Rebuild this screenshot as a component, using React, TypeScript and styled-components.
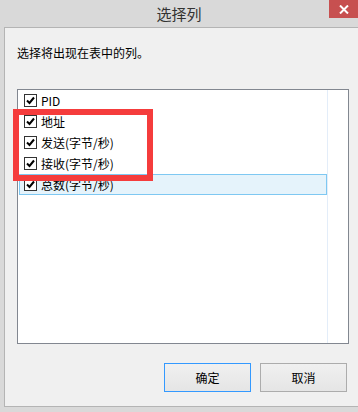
import React from "react";
import styled, { createGlobalStyle } from "styled-components";

const Global = createGlobalStyle`
  html, body { margin: 0; padding: 0; }
  body {
    background: #d9d9d9;
    font-family: "Noto Sans CJK SC", "Noto Sans", sans-serif;
    font-size: 12px;
    color: #000;
  }
`;

const Window = styled.div`
  position: relative;
  width: 358px;
  height: 412px;
  display: flex;
  flex-direction: column;
  overflow: hidden;
  background: #d9d9d9;
`;

const TitleBar = styled.div`
  height: 27px;
  display: grid;
  grid-template-columns: 1fr auto 1fr;
  align-items: start;
`;

const Title = styled.div`
  grid-column: 2;
  font-size: 15px;
  line-height: 27px;
  color: #333;
`;

const CloseButton = styled.div`
  grid-column: 3;
  justify-self: end;
  width: 29px;
  height: 18px;
  background: #c75050;
  display: flex;
  align-items: center;
  justify-content: center;
`;

const Client = styled.div`
  margin: 0 0 5px 4px;
  flex: 1;
  background: #f0f0f0;
  border: 1px solid #b4b4b4;
  border-right: none;
  padding: 17px 0 0 12px;
  display: flex;
  flex-direction: column;
`;

const Prompt = styled.div`
  line-height: 16px;
  height: 16px;
`;

const ListBox = styled.div`
  margin-top: 28px;
  width: 328px;
  height: 253px;
  background: #fff;
  border: 1px solid #828790;
  padding: 0 1px;
  display: flex;
`;

const Column = styled.div`
  width: 308px;
  border-right: 1px solid #e3edf9;
  display: flex;
  flex-direction: column;
`;

const Row = styled.div<{ $selected?: boolean }>`
  height: 21px;
  box-sizing: border-box;
  display: flex;
  align-items: center;
  gap: 4px;
  padding-left: ${(p) => (p.$selected ? 4 : 5)}px;
  background: ${(p) => (p.$selected ? "#e5f3fb" : "transparent")};
  border: ${(p) => (p.$selected ? "1px solid #7ec8f2" : "none")};
  line-height: 16px;
`;

const Box = styled.span`
  width: 11px;
  height: 11px;
  border: 1px solid #333;
  background: #fff;
  display: flex;
  align-items: center;
  justify-content: center;
  flex: none;
`;

const Buttons = styled.div`
  margin-top: 19px;
  width: 330px;
  display: flex;
  justify-content: flex-end;
  gap: 9px;
`;

const Button = styled.div<{ $default?: boolean }>`
  width: 85px;
  height: 27px;
  border: 1px solid ${(p) => (p.$default ? "#3399ff" : "#acacac")};
  background: linear-gradient(#f0f0f0, #e5e5e5);
  display: flex;
  align-items: center;
  justify-content: center;
`;

const Highlight = styled.div`
  position: absolute;
  left: 13px;
  top: 109px;
  width: 128px;
  height: 60px;
  border: 6px solid #f53c3c;
  pointer-events: none;
`;

const Check = () => (
  <Box>
    <svg width="11" height="11" viewBox="0 0 11 11">
      <polyline
        points="2,5.5 4.5,8 9,2.5"
        fill="none"
        stroke="#000"
        strokeWidth="2"
      />
    </svg>
  </Box>
);

const items = ["PID", "地址", "发送(字节/秒)", "接收(字节/秒)", "总数(字节/秒)"];

export default function App() {
  return (
    <>
      <Global />
      <Window>
        <TitleBar>
          <Title>选择列</Title>
          <CloseButton>
            <svg width="10" height="9" viewBox="0 0 10 9">
              <path d="M1 0.5 L9 8.5 M9 0.5 L1 8.5" stroke="#fff" strokeWidth="2" />
            </svg>
          </CloseButton>
        </TitleBar>
        <Client>
          <Prompt>选择将出现在表中的列。</Prompt>
          <ListBox>
            <Column>
              {items.map((t, i) => (
                <Row key={t} $selected={i === 4}>
                  <Check />
                  <span>{t}</span>
                </Row>
              ))}
            </Column>
          </ListBox>
          <Buttons>
            <Button $default>确定</Button>
            <Button>取消</Button>
          </Buttons>
        </Client>
        <Highlight />
      </Window>
    </>
  );
}
